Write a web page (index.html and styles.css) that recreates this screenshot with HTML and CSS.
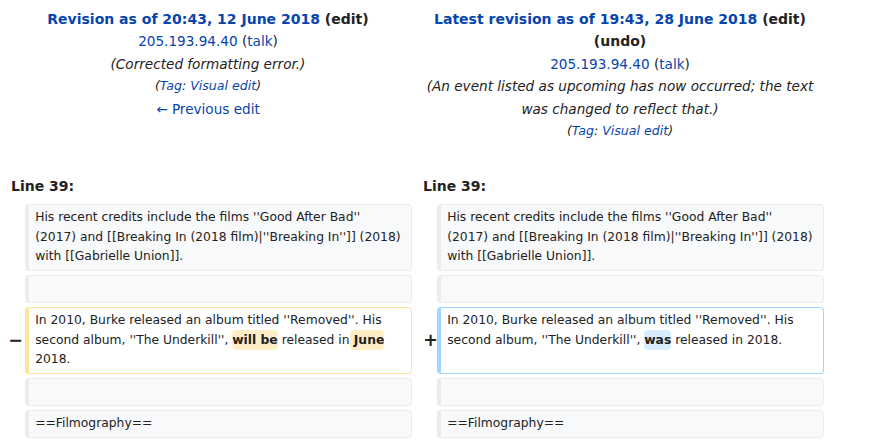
FILE: index.html
```html
<!DOCTYPE html>
<html>
<head>
<meta charset="utf-8">
<link rel="stylesheet" href="styles.css">
</head>
<body>
<div class="diff">
  <div class="title title-old">
    <div class="strong"><a class="lnk" href="#">Revision as of 20:43, 12 June 2018</a> <span class="paren">(<span class="dark">edit</span>)</span></div>
    <div class="line"><a class="lnk" href="#">205.193.94.40</a> (<a class="lnk" href="#">talk</a>)</div>
    <div class="line comment">(Corrected formatting error.)</div>
    <div class="tags">(<a class="lnk" href="#">Tag</a>: <a class="lnk" href="#">Visual edit</a>)</div>
    <div class="line"><a class="lnk" href="#">← Previous edit</a></div>
  </div>
  <div class="title title-new">
    <div class="strong"><a class="lnk" href="#">Latest revision as of 19:43, 28 June 2018</a> <span class="paren">(<span class="dark">edit</span>)</span> <span class="paren">(<span class="dark">undo</span>)</span></div>
    <div class="line"><a class="lnk" href="#">205.193.94.40</a> (<a class="lnk" href="#">talk</a>)</div>
    <div class="line comment">(An event listed as upcoming has now occurred; the text was changed to reflect that.)</div>
    <div class="tags">(<a class="lnk" href="#">Tag</a>: <a class="lnk" href="#">Visual edit</a>)</div>
  </div>

  <div class="lineno lineno-old">Line 39:</div>
  <div class="lineno lineno-new">Line 39:</div>

  <div class="marker"></div>
  <div class="cell context">His recent credits include the films ''Good After Bad'' (2017) and [[Breaking In (2018 film)|''Breaking In'']] (2018) with [[Gabrielle Union]].</div>
  <div class="marker"></div>
  <div class="cell context">His recent credits include the films ''Good After Bad'' (2017) and [[Breaking In (2018 film)|''Breaking In'']] (2018) with [[Gabrielle Union]].</div>

  <div class="marker"></div>
  <div class="cell context"><br></div>
  <div class="marker"></div>
  <div class="cell context"><br></div>

  <div class="marker marker-del">−</div>
  <div class="cell deleted">In 2010, Burke released an album titled ''Removed''. His second album, ''The Underkill'', <del class="chg">will be</del> released in<del class="chg"> June</del> 2018.</div>
  <div class="marker marker-add">+</div>
  <div class="cell added">In 2010, Burke released an album titled ''Removed''. His second album, ''The Underkill'', <ins class="chg">was</ins> released in 2018.</div>

  <div class="marker"></div>
  <div class="cell context"><br></div>
  <div class="marker"></div>
  <div class="cell context"><br></div>

  <div class="marker"></div>
  <div class="cell context">==Filmography==</div>
  <div class="marker"></div>
  <div class="cell context">==Filmography==</div>
</div>
</body>
</html>
```

FILE: styles.css
```css
html, body {
  margin: 0;
  padding: 0;
  background: #ffffff;
}

body {
  font-family: "DejaVu Sans", sans-serif;
  font-size: 14px;
  line-height: 22.4px;
  color: #222222;
}

.diff {
  display: grid;
  grid-template-columns: 25px 387px 25px 387px;
  row-gap: 4px;
  width: 824px;
}

.lnk {
  color: #0645ad;
  text-decoration: none;
}

.dark {
  color: #222222;
}

.title {
  grid-column: span 2;
  text-align: center;
  padding-top: 8px;
}

.title-old {
  padding-left: 4px;
}

.title-new {
  padding-left: 4px;
}

.strong {
  font-weight: bold;
}

.line {
  font-size: 13.6px;
}

.comment {
  font-style: italic;
}

.tags {
  font-style: italic;
  font-size: 12.6px;
}

.lineno {
  grid-column: span 2;
  font-weight: bold;
  padding-left: 11px;
  margin-top: 29px;
  margin-bottom: 2px;
}

.marker {
  display: flex;
  align-items: center;
  justify-content: flex-end;
  font-weight: bold;
  font-size: 17.5px;
  line-height: 1;
}

.marker-del {
  padding-right: 2px;
}

.marker-add {
  padding-right: 0;
  margin-right: -1px;
}

.cell {
  font-size: 12.32px;
  line-height: 1.6;
  padding: 0.25em 0.5em;
  border: 1px solid #eaecf0;
  border-left-width: 4px;
  border-radius: 0.33em;
  white-space: pre-wrap;
  word-wrap: break-word;
  color: #222222;
}

.context {
  background: #f8f9fa;
}

.deleted {
  background: #ffffff;
  border-color: #ffe49c;
}

.added {
  background: #ffffff;
  border-color: #a3d3ff;
}

.chg {
  text-decoration: none;
  font-weight: bold;
  border-radius: 0.33em;
  padding: 0.25em 0;
}

del.chg {
  background: #feeec8;
}

ins.chg {
  background: #d8ecff;
}
```
